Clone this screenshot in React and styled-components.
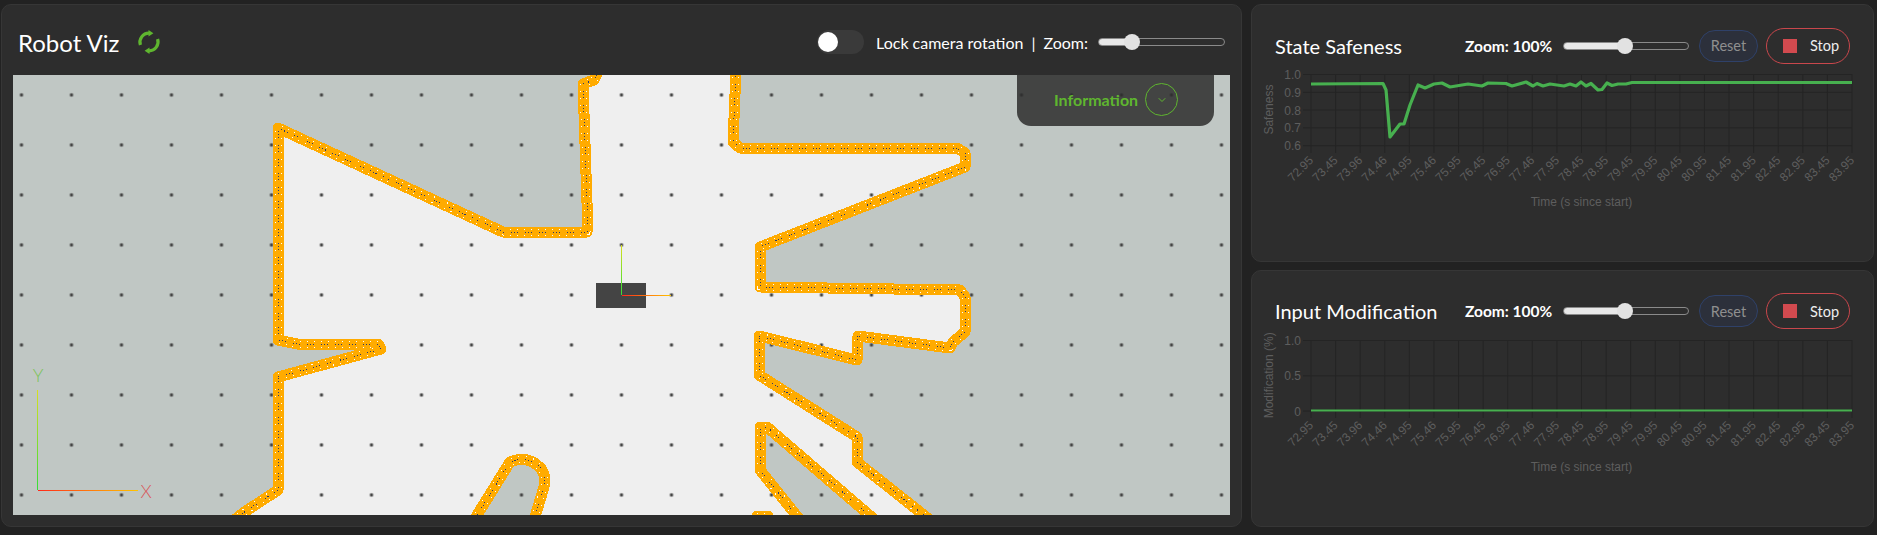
import React from "react";
import styled, { createGlobalStyle } from "styled-components";
import { ChevronDown } from "lucide-react";

const GlobalStyle = createGlobalStyle`
  html, body {
    margin: 0;
    background: #222222;
    font-family: Lato, "Liberation Sans", sans-serif;
    color: #fff;
  }
`;

const TICKS = [
  "72.95", "73.45", "73.96", "74.46", "74.95", "75.46", "75.95", "76.45",
  "76.95", "77.46", "77.95", "78.45", "78.95", "79.45", "79.95", "80.45",
  "80.95", "81.45", "81.95", "82.45", "82.95", "83.45", "83.95",
];

// safeness trace, [x, y] in plot pixels
const SAFENESS = [
  [0, 10], [72, 9.5], [75, 16], [79, 63], [89, 50], [93, 50], [99, 31], [107, 11],
  [114, 14], [123, 10], [131, 9], [139, 13], [157, 10], [171, 12], [177, 9],
  [195, 9.5], [201, 12], [215, 8], [222, 12], [226, 9.5], [232, 12], [239, 10],
  [253, 12], [259, 10], [265, 12], [270, 8], [275, 12], [280, 9.5], [287, 16],
  [291, 15.5], [296, 9], [301, 11.5], [307, 10], [315, 10], [321, 8.5], [541, 8.5],
];

const WALLS = [
  "M598 72 L594 80 L583 84 L587 203 L587 232 L503 232 L278 128 L278 340 L297 344 L378 344 L381 349 L278 377 L278 490 L243 513 L232 522",
  "M736 70 L733 142 L740 148 L957 148 L965 153 L965 167 L760 247 L760 287 L960 290 L965 297 L965 332 L953 342 L950 348 L858 336 L857 360 L759 336 L759 375 L857 437 L857 462 L930 520",
  "M800 520 L760 470 L760 427 L767 427 L875 520",
  "M474 520 L510 462 L516 460 L524 459 L533 462 L541 468 L545 477 L544 487 L534 520",
  "M757 516 L768 516",
];

const GREY_AREAS = [
  "13,75 598,75 594,80 583,84 587,203 587,232 503,232 278,128 278,340 297,344 378,344 381,349 278,377 278,490 243,513 232,520 13,520",
  "736,75 733,142 740,148 957,148 965,153 965,167 760,247 760,287 960,290 965,297 965,332 953,342 950,348 858,336 857,360 759,336 759,375 857,437 857,462 930,520 1235,520 1235,75",
  "760,427 767,427 875,520 800,520 760,470",
  "474,520 510,462 516,460 524,459 533,462 541,468 545,477 544,487 534,520",
];

export default function App() {
  return (
    <Page>
      <GlobalStyle />
      <VizPanel>
        <VizHeader>
          <VizTitle>Robot Viz</VizTitle>
          <SyncIcon />
          <HeaderControls>
            <Toggle><Knob /></Toggle>
            <span>Lock camera rotation</span>
            <Divider>|</Divider>
            <span>Zoom:</span>
            <Slider type="range" defaultValue={23} $fill={23} $width={127} />
          </HeaderControls>
        </VizHeader>
        <Viewport>
          <SceneDrawing />
          <InfoTab>
            Information
            <InfoButton><ChevronDown size={12} strokeWidth={2} /></InfoButton>
          </InfoTab>
        </Viewport>
      </VizPanel>
      <ChartColumn>
        <ChartPanel
          title="State Safeness"
          yTitle="Safeness"
          yLabels={[["1.0", 0], ["0.9", 17.8], ["0.8", 35.5], ["0.7", 53.3], ["0.6", 71.2]]}
          plotHeight={79}
          points={SAFENESS}
          lineWidth={3.2}
        />
        <ChartPanel
          title="Input Modification"
          yTitle="Modification (%)"
          yLabels={[["1.0", 0], ["0.5", 35.3], ["0", 70.6]]}
          plotHeight={78}
          points={[[0, 70.6], [541, 70.6]]}
          lineWidth={2}
        />
      </ChartColumn>
    </Page>
  );
}

function SyncIcon() {
  return (
    <SyncSvg viewBox="0 0 24 26" width="24" height="26">
      <g fill="none" stroke="#5fb62f" strokeWidth="3.2">
        <path d="M3.4 16 A9 9 0 0 1 12 4.2" />
        <path d="M20.6 10 A9 9 0 0 1 12 21.8" />
      </g>
      <path d="M11.5 1 L16.4 4.2 L11.5 7.4 Z M12.5 18.6 L7.6 21.8 L12.5 25 Z" fill="#5fb62f" />
    </SyncSvg>
  );
}

function SceneDrawing() {
  return (
    <SceneSvg viewBox="13 75 1217 440">
      <defs>
        <pattern id="dots" x="21.5" y="95" width="50" height="50" patternUnits="userSpaceOnUse">
          <circle cx="0" cy="0" r="2.2" fill="#444" opacity="0.35" />
          <circle cx="50" cy="0" r="2.2" fill="#444" opacity="0.35" />
          <circle cx="0" cy="50" r="2.2" fill="#444" opacity="0.35" />
          <circle cx="50" cy="50" r="2.2" fill="#444" opacity="0.35" />
          <circle cx="0" cy="0" r="1.4" fill="#444" />
          <circle cx="50" cy="0" r="1.4" fill="#444" />
          <circle cx="0" cy="50" r="1.4" fill="#444" />
          <circle cx="50" cy="50" r="1.4" fill="#444" />
        </pattern>
        <linearGradient id="axisX" x1="0" x2="1" y1="0" y2="0">
          <stop offset="0" stopColor="#ff2a1a" />
          <stop offset="1" stopColor="#ffc400" />
        </linearGradient>
        <linearGradient id="axisY" x1="0" x2="0" y1="1" y2="0">
          <stop offset="0" stopColor="#35dd35" />
          <stop offset="1" stopColor="#d8e020" />
        </linearGradient>
      </defs>
      <rect x="13" y="75" width="1217" height="440" fill="#efefef" />
      {GREY_AREAS.map((points) => (
        <polygon key={points} points={points} fill="#c0c7c4" />
      ))}
      <rect x="13" y="75" width="1217" height="440" fill="url(#dots)" />
      <g fill="none" strokeLinejoin="round" strokeLinecap="round" shapeRendering="crispEdges">
        {WALLS.map((d) => (
          <g key={d}>
            <path d={d} stroke="#ffab00" strokeWidth="11" />
            <path d={d} stroke="#fff" strokeWidth="7" strokeDasharray="1 6" strokeLinecap="butt" />
            <path d={d} stroke="#ffab00" strokeWidth="5" />
            <path d={d} stroke="#2b3a6b" strokeWidth="1" strokeDasharray="1 2 1 2 1 7" strokeLinecap="butt" />
          </g>
        ))}
      </g>
      <rect x="596" y="283" width="50" height="25" fill="#444" />
      <rect x="621" y="245" width="1" height="50" fill="url(#axisY)" />
      <rect x="622" y="295" width="49" height="1" fill="url(#axisX)" />
      <rect x="37" y="390" width="1" height="100" fill="url(#axisY)" />
      <rect x="38" y="490" width="100" height="1" fill="url(#axisX)" />
      <AxisLetter x="38" y="382" fill="#7cc35a">Y</AxisLetter>
      <AxisLetter x="146" y="498" fill="#d9575a">X</AxisLetter>
    </SceneSvg>
  );
}

function ChartPanel({ title, yTitle, yLabels, plotHeight, points, lineWidth }) {
  const left = 59;
  const width = 541;
  const step = width / (TICKS.length - 1);
  const line = points.map(([x, y]) => `${left + x},${y + 4}`).join(" ");
  const midY = (yLabels[0][1] + yLabels[yLabels.length - 1][1]) / 2 + 4;
  return (
    <Card>
      <CardHeader>
        <CardTitle>{title}</CardTitle>
        <ZoomGroup>
          <ZoomLabel>Zoom: 100%</ZoomLabel>
          <Slider type="range" defaultValue={49} $fill={49} $width={126} />
        </ZoomGroup>
        <ResetButton>Reset</ResetButton>
        <StopButton><StopSquare />Stop</StopButton>
      </CardHeader>
      <ChartSvg viewBox="0 0 621 145">
        <g stroke="#242424" strokeWidth="1">
          {TICKS.map((t, i) => (
            <line key={t} x1={left + step * i} x2={left + step * i} y1="4" y2={plotHeight + 4} />
          ))}
          {yLabels.map(([label, y]) => (
            <line key={label} x1={left - 8} x2={left + width} y1={y + 4.5} y2={y + 4.5} />
          ))}
        </g>
        <polyline points={line} fill="none" stroke="#47b04f" strokeWidth={lineWidth} strokeLinejoin="round" />
        <g fill="#5e5e5e" fontFamily="'Liberation Sans', Arial, sans-serif" fontSize="12">
          {yLabels.map(([label, y]) => (
            <text key={label} x={left - 10} y={y + 9} textAnchor="end">{label}</text>
          ))}
          {TICKS.map((t, i) => (
            <text
              key={t}
              textAnchor="end"
              transform={`translate(${left + step * i + 3} ${plotHeight + 12}) rotate(-45)`}
            >
              {t}
            </text>
          ))}
          <text transform={`translate(21 ${midY}) rotate(-90)`} textAnchor="middle">{yTitle}</text>
          <text x={left + width / 2} y={plotHeight + 57} textAnchor="middle">Time (s since start)</text>
        </g>
      </ChartSvg>
    </Card>
  );
}

const Page = styled.div`
  display: flex;
  gap: 8px;
  height: 535px;
  box-sizing: border-box;
  padding: 4px 3px 8px 1px;
  overflow: hidden;
`;

const VizPanel = styled.section`
  width: 1241px;
  box-sizing: border-box;
  display: flex;
  flex-direction: column;
  background: #2d2d2d;
  border: 1px solid #363636;
  border-radius: 10px;
  padding: 0 11px 10px 11px;
`;

const VizHeader = styled.header`
  height: 70px;
  box-sizing: border-box;
  padding-top: 4px;
  display: flex;
  align-items: center;
  flex: none;
`;

const VizTitle = styled.h1`
  margin: 0 0 0 5px;
  font-size: 24px;
  font-weight: 400;
`;

const SyncSvg = styled.svg`
  margin-left: 18px;
`;

const HeaderControls = styled.div`
  margin-left: auto;
  margin-right: 5px;
  display: flex;
  align-items: center;
  font-size: 16px;
`;

const Toggle = styled.div`
  width: 47px;
  height: 24px;
  border-radius: 12px;
  background: #3a3a3a;
  display: flex;
  align-items: center;
  padding-left: 1px;
  box-sizing: border-box;
  margin-right: 12px;
`;

const Knob = styled.div`
  width: 20px;
  height: 20px;
  border-radius: 50%;
  background: #fff;
`;

const Divider = styled.span`
  margin: 0 8px 0 8px;
`;

const Slider = styled.input`
  appearance: none;
  -webkit-appearance: none;
  margin: 0 0 0 10px;
  padding: 0;
  width: ${(p) => p.$width}px;
  height: 8px;
  box-sizing: border-box;
  border: 1px solid #8a8a8a;
  border-radius: 4px;
  background: linear-gradient(
    to right,
    #e8e8e8 ${(p) => p.$fill + 6}%,
    #2d2d2d ${(p) => p.$fill + 6}%
  );

  &::-webkit-slider-thumb {
    -webkit-appearance: none;
    width: 16px;
    height: 16px;
    border-radius: 50%;
    background: #e2e2e2;
  }
`;

const Viewport = styled.div`
  position: relative;
  flex: 1;
  overflow: hidden;
`;

const SceneSvg = styled.svg`
  display: block;
  width: 1217px;
  height: 440px;
`;

const AxisLetter = styled.text`
  font-family: Lato, sans-serif;
  font-size: 18px;
  font-weight: 300;
  text-anchor: middle;
`;

const InfoTab = styled.div`
  position: absolute;
  top: 0;
  right: 16px;
  width: 197px;
  height: 51px;
  box-sizing: border-box;
  padding: 0 36px 2px 37px;
  display: flex;
  align-items: center;
  justify-content: space-between;
  background: rgba(45, 45, 45, 0.85);
  border-radius: 0 0 14px 14px;
  color: #5fb62f;
  font-size: 16px;
  font-weight: 700;
`;

const InfoButton = styled.div`
  width: 33px;
  height: 33px;
  box-sizing: border-box;
  border: 1px solid #5fb62f;
  border-radius: 50%;
  display: flex;
  align-items: center;
  justify-content: center;
`;

const ChartColumn = styled.div`
  width: 623px;
  margin-left: 1px;
  display: flex;
  flex-direction: column;
  gap: 8px;
`;

const Card = styled.section`
  flex: 1;
  box-sizing: border-box;
  background: #2d2d2d;
  border: 1px solid #363636;
  border-radius: 10px;
  overflow: hidden;
`;

const CardHeader = styled.header`
  height: 65px;
  display: flex;
  align-items: center;
  padding: 16px 0 0 23px;
  box-sizing: border-box;
`;

const CardTitle = styled.h2`
  margin: 0;
  width: 190px;
  font-size: 20px;
  font-weight: 400;
  white-space: nowrap;
`;

const ZoomGroup = styled.div`
  display: flex;
  align-items: center;
  width: 234px;
`;

const ZoomLabel = styled.span`
  font-size: 15.5px;
  font-weight: 700;
  white-space: nowrap;
  margin-right: 1px;
`;

const ResetButton = styled.button`
  width: 59px;
  height: 32px;
  margin-right: 8px;
  border: 1px solid #2f4169;
  border-radius: 16px;
  background: #2c303b;
  color: #8f8f8f;
  font: 400 14.5px Lato, sans-serif;
`;

const StopButton = styled.button`
  width: 84px;
  height: 36px;
  display: flex;
  align-items: center;
  gap: 13px;
  padding: 0 0 0 16px;
  border: 1px solid #c9474c;
  border-radius: 18px;
  background: transparent;
  color: #eee;
  font: 400 14.5px Lato, sans-serif;
`;

const StopSquare = styled.i`
  width: 14px;
  height: 14px;
  background: #d24a4f;
`;

const ChartSvg = styled.svg`
  display: block;
  width: 621px;
  height: 145px;
  overflow: visible;
`;
